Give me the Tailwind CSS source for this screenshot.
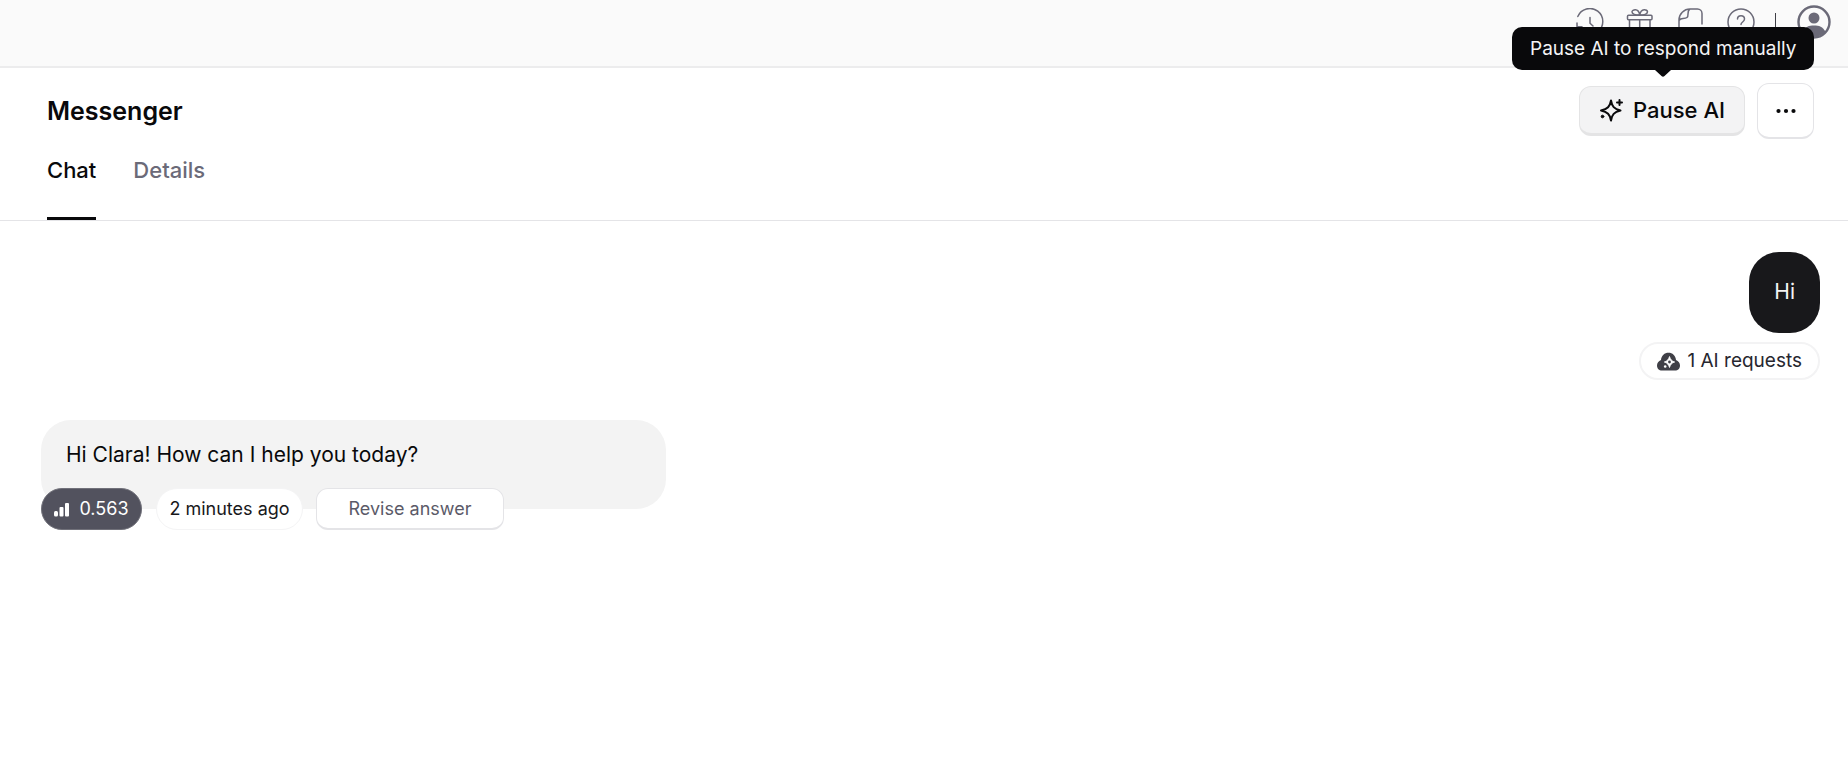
<!DOCTYPE html>
<html lang="en">
<head>
<meta charset="utf-8">
<meta name="viewport" content="width=device-width, initial-scale=1">
<title>Messenger</title>
<script src="https://cdn.jsdelivr.net/npm/@tailwindcss/browser@4"></script>
</head>
<body class="min-h-screen bg-white font-['Inter',sans-serif] text-[#09090b]">
<header class="flex h-[68px] items-start justify-end border-b-2 border-[#ececed] bg-[#fafafa] pt-[5px] pr-[17px] text-[#6b6a78]">
  <nav class="flex h-[34px] items-center" aria-label="Account">
    <button class="mr-[22px]" aria-label="History">
      <svg class="size-7" viewBox="0 0 28 28" fill="none" stroke="currentColor" stroke-width="1.500" stroke-linecap="round" stroke-linejoin="round"><path d="M1.800 8.500A13 13 0 1 1 1.800 18.500M1 15v3.800h5M14 9.500v5.700l3 2.800"/></svg>
    </button>
    <button class="mr-[22px]" aria-label="Gifts">
      <svg class="size-7" viewBox="0 0 28 28" fill="none" stroke="currentColor" stroke-width="1.500" stroke-linejoin="round"><rect x="1.500" y="7.200" width="24.500" height="4.600" rx="1"/><path d="M3.500 12v14h20.500V12M13.700 12v14M13.700 7C8 7 6 5.500 6 3.700S12.500-.5 13.700 7C15-.5 21.500 1.500 21.500 3.700S19.500 7 13.700 7"/></svg>
    </button>
    <button class="mr-[23px]" aria-label="Notes">
      <svg class="size-7" viewBox="0 0 28 28" fill="none" stroke="currentColor" stroke-width="1.500" stroke-linecap="round" stroke-linejoin="round"><path d="M3 26V12C3 6 8 1 14 1h7.500a4.500 4.500 0 0 1 4.500 4.500V16M3 12.500c1-1.500 2-2 4-2 4 0 5-1 5-4.500 0-2.500.5-4 2-5M3 26h15"/></svg>
    </button>
    <button class="mr-5" aria-label="Help">
      <svg class="size-7" viewBox="0 0 28 28" fill="none" stroke="currentColor" stroke-width="1.500" stroke-linecap="round"><circle cx="14" cy="14" r="13"/><path d="M10.500 11c0-4.500 7-4.500 7 0 0 3-3.500 3-3.500 5.500M14 20v.2"/></svg>
    </button>
    <span class="mr-[21px] h-[18px] w-px bg-[#3f3f46]"></span>
    <button aria-label="Profile">
      <svg class="size-[34px]" viewBox="0 0 34 34"><circle cx="17" cy="17" r="15.500" fill="none" stroke="currentColor" stroke-width="2.400"/><circle cx="17" cy="13" r="5.500" fill="currentColor"/><path d="M5.500 27C8 21.500 12 20.500 17 20.500s9 1 11.500 6.500A16 16 0 0 1 5.500 27z" fill="currentColor"/></svg>
    </button>
  </nav>
</header>

<main>
  <section class="border-b border-[#e4e4e7]">
    <div class="flex items-center justify-between pt-[15px] pr-[34px] pl-[47px]">
      <h1 class="text-[25px] leading-8 font-semibold">Messenger</h1>
      <div class="flex items-center gap-3">
        <div class="relative">
          <button aria-describedby="pause-tip" class="flex h-[50px] w-[166px] items-center justify-center gap-[10px] rounded-[12px] border border-b-3 border-[#e4e4e5] bg-[#f3f3f4] text-[22px] leading-7 font-medium">
            <svg class="size-6" viewBox="0 0 24 24" fill="none" stroke="currentColor" stroke-width="2" stroke-linecap="round" stroke-linejoin="round"><path d="M12 2.500c1 6 3 8.500 9.500 10-6.500 1.500-8.500 4-9.500 10-1-6-3.500-8.500-10-10 6.500-1.500 9-4 10-10zM20.500 2v5M18 4.500h5"/><circle cx="3.500" cy="18.500" r="1.300" fill="currentColor" stroke-width="1"/></svg>
            Pause AI
          </button>
          <div id="pause-tip" role="tooltip" class="absolute bottom-[66px] left-1/2 flex h-[43px] -translate-x-[150px] items-center rounded-[10px] bg-[#09090b] px-[18px] text-[19px] leading-6 whitespace-nowrap text-[#f4f4f5]">
            Pause AI to respond manually
            <svg class="absolute top-full left-1/2 h-[7px] w-4 -translate-x-1/2" viewBox="0 0 16 7" fill="#09090b"><path d="M0 0h16L9.500 6q-1.500 1.500-3 0z"/></svg>
          </div>
        </div>
        <button aria-label="More options" class="flex h-[56px] w-[57px] items-center justify-center rounded-[12px] border border-b-2 border-[#e4e4e7] bg-white">
          <svg class="h-5 w-5" viewBox="0 0 20 20" fill="currentColor"><circle cx="2.500" cy="10" r="2.100"/><circle cx="10" cy="10" r="2.100"/><circle cx="17.500" cy="10" r="2.100"/></svg>
        </button>
      </div>
    </div>
    <nav class="flex gap-[37px] pt-[17px] pl-[47px] text-[22px] leading-7 font-medium" aria-label="Views">
      <a href="#chat" aria-current="page" class="border-b-3 border-[#09090b] pb-[33px]">Chat</a>
      <a href="#details" class="text-[#6b6a78]">Details</a>
    </nav>
  </section>

  <section id="chat" class="pt-[31px] pr-7 pl-[41px]">
    <div class="flex flex-col items-end">
      <p class="rounded-[30px] bg-[#18181b] px-[25px] pt-[26px] pb-[27px] text-[21px] leading-7 text-[#f4f4f5]">Hi</p>
      <p class="mt-[9px] flex h-[38px] items-center gap-[7px] rounded-full border-2 border-[#f3f3f4] px-4 text-[19px] leading-6 text-[#27272f]">
        <svg class="h-[19px] w-[23px]" viewBox="0 0 23 19"><path d="M5 18.500C2 18.500 0 16.500 0 13.500c0-2.500 1.500-4.500 4-5.500C4.500 3.500 7.500 .8 11.500 .8S18.500 3.500 19 8c2.500 1 4 3 4 5.500 0 3-2 5-5 5z" fill="#3f3f46"/><path d="M12.500 4.500c1 3.200 2.200 4.500 5.200 5.500-3 1-4.200 2.300-5.200 5.500-1-3.200-2.200-4.500-5.200-5.500 3-1 4.200-2.300 5.200-5.500z" fill="#fff" stroke="#fff" stroke-width=".8" stroke-linejoin="round"/><circle cx="12.500" cy="10" r="1.400" fill="#3f3f46"/><circle cx="8.200" cy="14.500" r="1.300" fill="#fff"/></svg>
        1 AI requests
      </p>
    </div>
    <div class="mt-10">
      <p class="h-[89px] w-full max-w-[625px] rounded-[30px] bg-[#f3f3f3] px-[25px] pt-[21px] text-[21px] leading-7">Hi Clara! How can I help you today?</p>
      <div class="relative -mt-[21px] flex text-[18px] leading-6">
        <span class="mr-[14px] flex h-[42px] w-[101px] items-center justify-center gap-[10px] rounded-full border border-[#71717a] bg-[#52525e] text-white">
          <svg class="size-[15px]" viewBox="0 0 15 15" fill="currentColor"><rect y="9" width="4" height="5.500" rx="1.500"/><rect x="5.500" y="5" width="4" height="9.500" rx="1"/><rect x="11" y="1" width="4" height="13.500" rx="1"/></svg>
          0.563
        </span>
        <span class="mr-[13px] flex h-[42px] w-[147px] items-center justify-center rounded-full border border-[#f4f4f5] bg-white whitespace-nowrap text-[#18181b]">2 minutes ago</span>
        <button class="h-[42px] w-[188px] rounded-[12px] border border-b-2 border-[#e4e4e7] bg-white text-[#5b5a68]">Revise answer</button>
      </div>
    </div>
  </section>
</main>
</body>
</html>
